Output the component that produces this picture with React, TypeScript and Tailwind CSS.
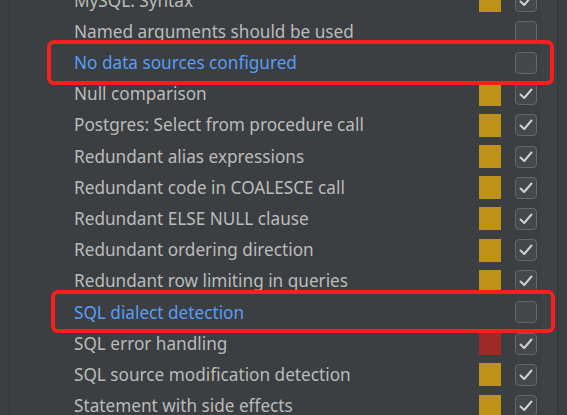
type Severity = "warning" | "error" | null;

interface Inspection {
  name: string;
  severity: Severity;
  enabled: boolean;
  highlighted?: boolean;
}

const inspections: Inspection[] = [
  { name: "MySQL: Syntax", severity: "warning", enabled: true },
  { name: "Named arguments should be used", severity: null, enabled: false },
  { name: "No data sources configured", severity: null, enabled: false, highlighted: true },
  { name: "Null comparison", severity: "warning", enabled: true },
  { name: "Postgres: Select from procedure call", severity: "warning", enabled: true },
  { name: "Redundant alias expressions", severity: "warning", enabled: true },
  { name: "Redundant code in COALESCE call", severity: "warning", enabled: true },
  { name: "Redundant ELSE NULL clause", severity: "warning", enabled: true },
  { name: "Redundant ordering direction", severity: "warning", enabled: true },
  { name: "Redundant row limiting in queries", severity: "warning", enabled: true },
  { name: "SQL dialect detection", severity: null, enabled: false, highlighted: true },
  { name: "SQL error handling", severity: "error", enabled: true },
  { name: "SQL source modification detection", severity: "warning", enabled: true },
  { name: "Statement with side effects", severity: "warning", enabled: true },
];

const Checkbox = ({ checked }: { checked: boolean }) => (
  <div className="flex h-[22px] w-[22px] items-center justify-center rounded-[4px] border border-[#646869] bg-[#43494a]">
    {checked && (
      <svg width="14" height="12" viewBox="0 0 14 12" fill="none">
        <path
          d="M1.5 6.5 L5.2 10 L12.5 1.5"
          stroke="#d0d0d0"
          strokeWidth="2"
          strokeLinecap="round"
          strokeLinejoin="round"
        />
      </svg>
    )}
  </div>
);

const Row = ({ item }: { item: Inspection }) => (
  <div className="flex h-[31.2px] shrink-0 items-center pl-[64px] pr-[4px]">
    <span
      className={`flex-1 whitespace-nowrap text-[17.2px] ${
        item.highlighted ? "text-[#589df6]" : "text-[#bbbbbb]"
      }`}
    >
      {item.name}
    </span>
    <div className="mr-[14px] h-[23px] w-[22px]">
      {item.severity === "warning" && <div className="h-full w-full bg-[#be9117]" />}
      {item.severity === "error" && <div className="h-full w-full bg-[#9e2927]" />}
    </div>
    <Checkbox checked={item.enabled} />
  </div>
);

export default function App() {
  return (
    <div
      className="relative flex h-[415px] w-[567px] overflow-hidden bg-[#3c3f41]"
      style={{ fontFamily: '"Noto Sans", "Open Sans", sans-serif' }}
    >
      <div className="w-[10px] shrink-0 border-r border-[#323437]" />
      <div className="flex w-[531px] shrink-0 flex-col">
        <div className="-mt-[15px] flex flex-col">
          {inspections.map((item) => (
            <Row key={item.name} item={item} />
          ))}
        </div>
      </div>
      <div className="w-[16px] shrink-0 bg-[#3e4244]" />
      <div className="flex-1 border-l border-[#333537]" />

      {/* highlight boxes */}
      <div className="absolute left-[47px] top-[40px] h-[45px] w-[507px] rounded-[7px] border-4 border-[#fa1e1e]" />
      <div className="absolute left-[51px] top-[290px] h-[43px] w-[504px] rounded-[7px] border-4 border-[#fa1e1e]" />
    </div>
  );
}
